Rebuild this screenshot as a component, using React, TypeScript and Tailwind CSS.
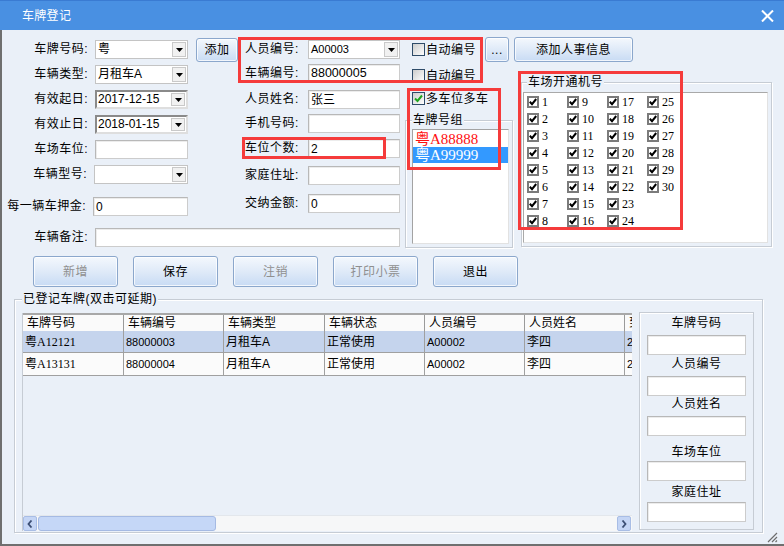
import React from "react";

const Tri = () => (
  <svg width="7" height="4" viewBox="0 0 7 4">
    <path d="M0 0H7L3.5 4Z" fill="#000" />
  </svg>
);

function Lbl({ children, className = "" }: { children?: React.ReactNode; className?: string }) {
  return (
    <div className={`text-[12px] leading-[19px] tracking-[0.5px] whitespace-nowrap ${className}`}>{children}</div>
  );
}

function Combo({ children, className = "" }: { children?: React.ReactNode; className?: string }) {
  return (
    <div className={`h-[19px] bg-white border border-[#c4c4c4] flex items-center ${className}`}>
      <div className="pl-[2px] flex-1 whitespace-nowrap overflow-hidden leading-[17px]">{children}</div>
      <div className="mr-[1px] w-[14px] h-[15px] border border-[#c9c9c9] bg-[#f1f1f1] flex items-center justify-center">
        <Tri />
      </div>
    </div>
  );
}

function DateBox({ value }: { value: string }) {
  return (
    <div className="w-[93px] h-[19px] bg-white border-2 border-t-[#8a8a8a] border-l-[#8a8a8a] border-r-[#dedede] border-b-[#dedede] flex items-center">
      <div className="pl-[1px] flex-1 text-[12px] leading-[15px] font-['Liberation_Sans',sans-serif]">{value}</div>
      <div className="mr-[1px] w-[14px] h-[13px] border border-[#c9c9c9] bg-[#f1f1f1] flex items-center justify-center">
        <Tri />
      </div>
    </div>
  );
}

function TextBox({ children, className = "" }: { children?: React.ReactNode; className?: string }) {
  return (
    <div
      className={`h-[19px] bg-white border border-[#cccccc] border-t-[#b8b8b8] border-l-[#b8b8b8] shadow-[inset_1px_1px_0_#ececec] flex items-center pl-[2px] whitespace-nowrap overflow-hidden ${className}`}
    >
      {children}
    </div>
  );
}

function Btn({
  children,
  className = "",
  disabled = false,
}: {
  children?: React.ReactNode;
  className?: string;
  disabled?: boolean;
}) {
  return (
    <div
      className={`rounded-[3px] border border-[#8ba7cc] bg-linear-to-b from-[#f4f8fd] via-[#dfeaf8] to-[#c8dbf4] shadow-[inset_0_0_0_1px_rgba(255,255,255,0.75)] flex items-center justify-center text-[12px] leading-none tracking-[0.5px] ${
        disabled ? "text-[#8f8f8f]" : "text-black"
      } ${className}`}
    >
      {children}
    </div>
  );
}

function AutoChk({ checked = false, label }: { checked?: boolean; label: string }) {
  return (
    <div className="flex items-center">
      <div className="w-[13px] h-[13px] border border-[#2e4b68] bg-linear-to-br from-[#cdcdcd] to-white flex items-center justify-center">
        {checked && (
          <svg width="9" height="9" viewBox="0 0 9 9">
            <path d="M1 4.5 L3.5 7 L8 1.5" stroke="#1fa51f" strokeWidth="2" fill="none" />
          </svg>
        )}
      </div>
      <span className="ml-[1px] text-[12px] leading-[14px] tracking-[0.5px]">{label}</span>
    </div>
  );
}

function GridChk({ n }: { n: number }) {
  return (
    <div className="flex items-center">
      <div className="w-[12px] h-[12px] border-2 border-[#7b7b7b] bg-white flex items-center justify-center">
        <svg width="8" height="8" viewBox="0 0 8 8">
          <path d="M0.8 3.8 L3 6.2 L7.2 1" stroke="#000" strokeWidth="2" fill="none" />
        </svg>
      </div>
      <span className="ml-[3px] text-[12px] leading-[14px] font-['Liberation_Serif',serif]">{n}</span>
    </div>
  );
}

function Group({
  label,
  className = "",
  labelCls = "",
  children,
}: {
  label: string;
  className?: string;
  labelCls?: string;
  children?: React.ReactNode;
}) {
  return (
    <div className={`relative border border-[#c6ccd4] shadow-[inset_1px_1px_0_#ffffff,1px_1px_0_#ffffff] ${className}`}>
      <div
        className={`absolute -top-[8px] px-[1px] bg-[#eaf0f8] text-[12px] leading-[14px] tracking-[0.5px] whitespace-nowrap ${labelCls}`}
      >
        {label}
      </div>
      {children}
    </div>
  );
}

function LRow({ className = "", label, children }: { className?: string; label: string; children?: React.ReactNode }) {
  return (
    <div className={`flex items-center h-[19px] ${className}`}>
      <Lbl className="w-[86px] text-right">{label}</Lbl>
      <div className="ml-[7px]">{children}</div>
    </div>
  );
}

function MRow({ className = "", label, children }: { className?: string; label: string; children?: React.ReactNode }) {
  return (
    <div className={`flex items-center h-[19px] ${className}`}>
      <Lbl className="w-[63px]">{label}</Lbl>
      {children}
    </div>
  );
}

const nums = Array.from({ length: 30 }, (_, i) => i + 1);

const headers = ["车牌号码", "车辆编号", "车辆类型", "车辆状态", "人员编号", "人员姓名", "到"];
const colW = ["w-[100px]", "w-[100px]", "w-[101px]", "w-[100px]", "w-[100px]", "w-[100px]", "w-[9px] overflow-hidden"];
const colFont = [
  "text-[12px] font-['Liberation_Serif','Noto_Sans_CJK_SC',serif]",
  "text-[11px] font-['Liberation_Sans',sans-serif]",
  "text-[12px]",
  "text-[12px]",
  "text-[11px] font-['Liberation_Sans',sans-serif]",
  "text-[12px]",
  "text-[11px] font-['Liberation_Sans',sans-serif]",
];
const rows = [
  { bg: "bg-[#c5d4ed]", h: "h-[22px]", cells: ["粤A12121", "88000003", "月租车A", "正常使用", "A00002", "李四", "20"] },
  { bg: "bg-[#fbfbfb]", h: "h-[23px]", cells: ["粤A13131", "88000004", "月租车A", "正常使用", "A00002", "李四", "20"] },
];

function Chevron({ dir }: { dir: "l" | "r" }) {
  return (
    <svg width="6" height="8" viewBox="0 0 6 8">
      <path d={dir === "l" ? "M4.5 0.5 L1.5 4 L4.5 7.5" : "M1.5 0.5 L4.5 4 L1.5 7.5"} stroke="#3b4e74" strokeWidth="1.8" fill="none" />
    </svg>
  );
}

export default function App() {
  return (
    <div className="w-[784px] h-[546px] overflow-hidden relative font-['Liberation_Sans','Noto_Sans_CJK_SC',sans-serif] text-black">
      {/* title bar */}
      <div className="h-[30px] bg-[#4990e2] border-t border-[#3a7bd2] flex items-center pl-[22px] pr-[10px]">
        <span className="text-white text-[12px] leading-[14px] tracking-[0.3px]">车牌登记</span>
        <svg className="ml-auto" width="13" height="12" viewBox="0 0 13 12">
          <path d="M1 0.5 L12 11.5 M12 0.5 L1 11.5" stroke="#fff" strokeWidth="2" />
        </svg>
      </div>

      {/* body */}
      <div className="h-[516px] bg-[#eaf0f8] border-l-2 border-b-2 border-[#6f6f6f] flex flex-col pt-[7px]">
        {/* top area */}
        <div className="flex items-start">
          {/* left + middle block */}
          <div className="flex flex-col w-[398px]">
            <div className="flex items-start">
              <div className="w-[186px] flex flex-col">
                <LRow className="mt-[3px]" label="车牌号码:">
                  <Combo className="w-[93px] text-[12px]">粤</Combo>
                </LRow>
                <LRow className="mt-[6px]" label="车辆类型:">
                  <Combo className="w-[93px] text-[12px]">月租车A</Combo>
                </LRow>
                <LRow className="mt-[6px]" label="有效起日:">
                  <DateBox value="2017-12-15" />
                </LRow>
                <LRow className="mt-[6px]" label="有效止日:">
                  <DateBox value="2018-01-15" />
                </LRow>
                <LRow className="mt-[6px]" label="车场车位:">
                  <TextBox className="w-[93px]" />
                </LRow>
                <LRow className="mt-[6px]" label="车辆型号:">
                  <Combo className="w-[94px]" />
                </LRow>
                <LRow className="mt-[13px]" label="每一辆车押金:">
                  <TextBox className="w-[95px] text-[12px]">0</TextBox>
                </LRow>
              </div>
              <Btn className="ml-[8px] mt-[1px] w-[42px] h-[24px]">添加</Btn>
              <div className="w-[162px] pl-[7px] flex flex-col">
                <MRow className="mt-[3px]" label="人员编号:">
                  <Combo className="w-[92px] text-[11px] font-['Liberation_Sans',sans-serif]">A00003</Combo>
                </MRow>
                <MRow className="mt-[5px]" label="车辆编号:">
                  <TextBox className="w-[92px] text-[12.5px] font-['Liberation_Sans',sans-serif]">88000005</TextBox>
                </MRow>
                <MRow className="mt-[7px]" label="人员姓名:">
                  <TextBox className="w-[92px] text-[12px]">张三</TextBox>
                </MRow>
                <MRow className="mt-[5px]" label="手机号码:">
                  <TextBox className="w-[92px]" />
                </MRow>
                <MRow className="mt-[6px]" label="车位个数:">
                  <TextBox className="w-[92px] text-[12px]">2</TextBox>
                </MRow>
                <MRow className="mt-[8px]" label="家庭住址:">
                  <TextBox className="w-[92px]" />
                </MRow>
                <MRow className="mt-[9px]" label="交纳金额:">
                  <TextBox className="w-[92px] text-[12px]">0</TextBox>
                </MRow>
              </div>
            </div>
            <div className="mt-[12px] flex items-center h-[19px]">
              <Lbl className="w-[86px] text-right">车辆备注:</Lbl>
              <TextBox className="ml-[7px] w-[305px]" />
            </div>
          </div>

          {/* column D */}
          <div className="ml-[5px] w-[108px] flex flex-col">
            <div className="h-[25px] flex items-center pl-[7px]">
              <AutoChk label="自动编号" />
              <Btn className="ml-auto mr-[4px] w-[24px] h-[25px] text-[#333]">...</Btn>
            </div>
            <div className="mt-[7px] h-[13px] flex items-center pl-[7px]">
              <AutoChk label="自动编号" />
            </div>
            <div className="mt-[10px] h-[13px] flex items-center pl-[7px]">
              <AutoChk checked label="多车位多车" />
            </div>
            <Group label="车牌号组" labelCls="left-[6px]" className="mt-[15px] w-[108px] h-[128px]">
              <div className="ml-[6px] mt-[8px] w-[97px] h-[115px] bg-white border border-[#a3a3a3] border-r-[#e2e2e2] border-b-[#e2e2e2] pt-[1px] font-['Liberation_Serif','Noto_Sans_CJK_SC',serif] text-[15px]">
                <div className="h-[16px] flex items-center pl-[2px] text-[#ff1010] leading-[16px]">粤A88888</div>
                <div className="h-[16px] flex items-center pl-[2px] bg-[#3399ff] text-white leading-[16px]">粤A99999</div>
              </div>
            </Group>
          </div>

          {/* column E */}
          <div className="ml-[1px] w-[263px] flex flex-col">
            <Btn className="w-[119px] h-[25px]">添加人事信息</Btn>
            <Group label="车场开通机号" labelCls="left-[5px]" className="ml-[7px] mt-[20px] w-[251px] h-[165px]">
              <div className="ml-[1px] mt-[9px] w-[245px] h-[151px] bg-white border border-[#a9a9a9] border-r-[#e2e2e2] border-b-[#e2e2e2]">
                <div className="grid grid-flow-col grid-rows-[repeat(8,17px)] auto-cols-[40px] pl-[3px]">
                  {nums.map((n) => (
                    <GridChk key={n} n={n} />
                  ))}
                </div>
              </div>
            </Group>
          </div>
        </div>

        {/* buttons */}
        <div className="mt-[8px] ml-[31px] flex gap-[15px]">
          <Btn disabled className="w-[85px] h-[31px]">新增</Btn>
          <Btn className="w-[85px] h-[31px]">保存</Btn>
          <Btn disabled className="w-[85px] h-[31px]">注销</Btn>
          <Btn disabled className="w-[85px] h-[31px]">打印小票</Btn>
          <Btn className="w-[85px] h-[31px]">退出</Btn>
        </div>

        {/* registered list */}
        <Group label="已登记车牌(双击可延期)" labelCls="left-[7px]" className="mt-[12px] ml-[12px] w-[749px] h-[234px]">
          <div className="flex items-start">
            {/* table */}
            <div className="ml-[7px] mt-[13px] w-[610px] h-[218px] flex flex-col overflow-hidden border-l border-[#c6ccd4]">
              <div className="h-[18px] flex-none flex border-t-2 border-[#a8a8a8] bg-[#fafafa] whitespace-nowrap">
                {headers.map((h, i) => (
                  <div
                    key={h}
                    className={`flex-none ${colW[i]} h-full flex items-center ${i === 0 ? "" : "border-l border-[#9a9a9a]"} pl-[4px] text-[12px] leading-[14px]`}
                  >
                    {h}
                  </div>
                ))}
              </div>
              {rows.map((r, ri) => (
                <div key={ri} className={`${r.h} flex-none flex ${r.bg} border-b border-[#a0a0a0] whitespace-nowrap`}>
                  {r.cells.map((c, i) => (
                    <div
                      key={i}
                      className={`flex-none ${colW[i]} h-full flex items-center ${i === 0 ? "" : "border-l border-[#a0a0a0]"} pl-[2px] leading-[14px] ${colFont[i]}`}
                    >
                      {c}
                    </div>
                  ))}
                </div>
              ))}
              <div className="flex-1" />
              <div className="h-[16px] flex-none bg-[#f6f7f8] border-t border-[#e3e7ec] flex items-center">
                <div className="w-[14px] h-[15px] bg-[#c4d5f5] border border-[#a8bde5] rounded-[2px] flex items-center justify-center">
                  <Chevron dir="l" />
                </div>
                <div className="ml-[1px] w-[178px] h-[15px] rounded-[3px] bg-[#c5d7f7] border border-[#a5bae3]" />
                <div className="ml-auto mr-[1px] w-[14px] h-[15px] bg-[#c4d5f5] border border-[#a8bde5] rounded-[2px] flex items-center justify-center">
                  <Chevron dir="r" />
                </div>
              </div>
            </div>

            {/* side search panel */}
            <div className="ml-[7px] mt-[12px] w-[115px] h-[218px] border border-[#c6ccd4] shadow-[inset_1px_1px_0_#ffffff] flex flex-col items-center text-[12px] tracking-[0.5px]">
              <div className="mt-[3px] h-[14px] leading-[14px]">车牌号码</div>
              <TextBox className="mt-[5px] w-[99px] h-[20px]" />
              <div className="mt-[2px] h-[14px] leading-[14px]">人员编号</div>
              <TextBox className="mt-[5px] w-[99px] h-[20px]" />
              <div className="mt-[1px] h-[14px] leading-[14px]">人员姓名</div>
              <TextBox className="mt-[5px] w-[99px] h-[20px]" />
              <div className="mt-[9px] h-[14px] leading-[14px]">车场车位</div>
              <TextBox className="mt-[2px] w-[99px] h-[20px]" />
              <div className="mt-[4px] h-[14px] leading-[14px]">家庭住址</div>
              <TextBox className="mt-[3px] w-[99px] h-[20px]" />
            </div>
          </div>
        </Group>
      </div>

      {/* resize grip */}
      <svg className="absolute right-[6px] bottom-[3px]" width="12" height="12" viewBox="0 0 12 12">
        <path d="M11 2 L2 11 M11 6 L6 11 M11 9.5 L9.5 11" stroke="#6d6d6d" strokeWidth="1.2" />
      </svg>

      {/* red annotation boxes */}
      <div className="absolute left-[238px] top-[37px] w-[245px] h-[46px] border-[3px] border-[#f53b3b]" />
      <div className="absolute left-[518px] top-[71px] w-[165px] h-[159px] border-[3px] border-[#f53b3b]" />
      <div className="absolute left-[407px] top-[88px] w-[94px] h-[82px] border-[3px] border-[#f53b3b]" />
      <div className="absolute left-[242px] top-[137px] w-[144px] h-[22px] border-[3px] border-[#f53b3b]" />
    </div>
  );
}
